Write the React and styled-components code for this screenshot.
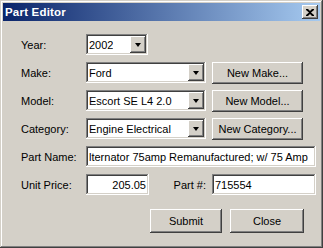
import React from 'react';
import styled, { createGlobalStyle } from 'styled-components';

const GlobalStyle = createGlobalStyle`
  html, body {
    margin: 0;
    padding: 0;
    background: #d4d0c8;
  }
  body {
    font-family: "Liberation Sans", Arial, sans-serif;
    font-size: 11px;
  }
`;

const raised = `
  box-shadow:
    inset -1px -1px #404040,
    inset 1px 1px #ffffff,
    inset -2px -2px #808080,
    inset 2px 2px #d4d0c8;
`;

const sunken = `
  box-shadow:
    inset -1px -1px #ffffff,
    inset 1px 1px #808080,
    inset -2px -2px #d4d0c8,
    inset 2px 2px #404040;
`;

const Window = styled.div`
  width: 323px;
  height: 248px;
  box-sizing: border-box;
  padding: 3px;
  background: #d4d0c8;
  display: flex;
  flex-direction: column;
  box-shadow:
    inset -1px -1px #404040,
    inset 1px 1px #d4d0c8,
    inset -2px -2px #808080,
    inset 2px 2px #ffffff;
`;

const TitleBar = styled.div`
  height: 18px;
  display: flex;
  align-items: center;
  justify-content: space-between;
  padding: 0 2px;
  background: linear-gradient(to right, #0a246a, #a6caf0);
`;

const Title = styled.span`
  color: #ffffff;
  font-weight: bold;
  font-size: 11.5px;
  letter-spacing: 0.2px;
`;

const CloseBox = styled.div`
  width: 16px;
  height: 14px;
  background: #d4d0c8;
  display: flex;
  align-items: center;
  justify-content: center;
  ${raised}
`;

const Form = styled.div`
  display: grid;
  grid-template-columns: 65px 126px 91px 13px;
  grid-auto-rows: 21px;
  row-gap: 7px;
  padding: 13px 0 0 18px;
  color: #000;
`;

const Label = styled.div`
  display: flex;
  align-items: center;
  padding-top: 1px;
`;

const Field = styled.div`
  box-sizing: border-box;
  height: 21px;
  width: ${(p) => (p.$w ? `${p.$w}px` : 'auto')};
  justify-self: ${(p) => (p.$w ? 'start' : 'stretch')};
  background: #fff;
  display: flex;
  align-items: center;
  padding: 0 3px;
  white-space: nowrap;
  overflow: hidden;
  justify-content: ${(p) => (p.$right ? 'flex-end' : 'flex-start')};
  grid-column: ${(p) => p.$span || 'auto'};
  ${sunken}
`;

const Combo = styled(Field)`
  padding: 0 2px 0 3px;
  justify-content: space-between;
`;

const ComboText = styled.span`
  overflow: hidden;
  white-space: nowrap;
`;

const DropButton = styled.div`
  flex: none;
  width: 16px;
  height: 17px;
  background: #d4d0c8;
  display: flex;
  align-items: center;
  justify-content: center;
  ${raised}
`;

const Arrow = styled.div`
  width: 0;
  height: 0;
  border-left: 3.5px solid transparent;
  border-right: 3.5px solid transparent;
  border-top: 4px solid #000;
`;

const Button = styled.div`
  box-sizing: border-box;
  width: ${(p) => p.$w || 91}px;
  height: ${(p) => p.$h || 22}px;
  background: #d4d0c8;
  display: flex;
  align-items: center;
  justify-content: center;
  ${raised}
`;

const PriceRow = styled.div`
  grid-column: 2 / 5;
  display: flex;
  align-items: center;
`;

const InlineLabel = styled.div`
  flex: 1;
  text-align: right;
  padding: 1px 6px 0 0;
`;

const ButtonRow = styled.div`
  display: flex;
  justify-content: flex-end;
  gap: 8px;
  padding: 14px 16px 0 0;
`;

function ComboBox({ value, width }) {
  return (
    <Combo $w={width}>
      <ComboText>{value}</ComboText>
      <DropButton>
        <Arrow />
      </DropButton>
    </Combo>
  );
}

export default function App() {
  return (
    <>
      <GlobalStyle />
      <Window>
        <TitleBar>
          <Title>Part Editor</Title>
          <CloseBox>
            <svg width="8" height="7" viewBox="0 0 8 7">
              <path d="M0 0h2l2 2 2-2h2v1L5 3.5 8 6v1H6L4 5 2 7H0V6l3-2.5L0 1z" fill="#000" />
            </svg>
          </CloseBox>
        </TitleBar>
        <Form>
          <Label>Year:</Label>
          <ComboBox value="2002" width={62} />
          <div />
          <div />

          <Label>Make:</Label>
          <ComboBox value="Ford" width={120} />
          <Button>New Make...</Button>
          <div />

          <Label>Model:</Label>
          <ComboBox value="Escort SE L4 2.0" width={120} />
          <Button>New Model...</Button>
          <div />

          <Label>Category:</Label>
          <ComboBox value="Engine Electrical" width={120} />
          <Button>New Category...</Button>
          <div />

          <Label>Part Name:</Label>
          <Field $span="2 / 5">lternator 75amp Remanufactured; w/ 75 Amp</Field>

          <Label>Unit Price:</Label>
          <PriceRow>
            <Field $w={63} $right>205.05</Field>
            <InlineLabel>Part #:</InlineLabel>
            <Field $w={104}>715554</Field>
          </PriceRow>
        </Form>
        <ButtonRow>
          <Button $w={72} $h={24}>Submit</Button>
          <Button $w={74} $h={24}>Close</Button>
        </ButtonRow>
      </Window>
    </>
  );
}
